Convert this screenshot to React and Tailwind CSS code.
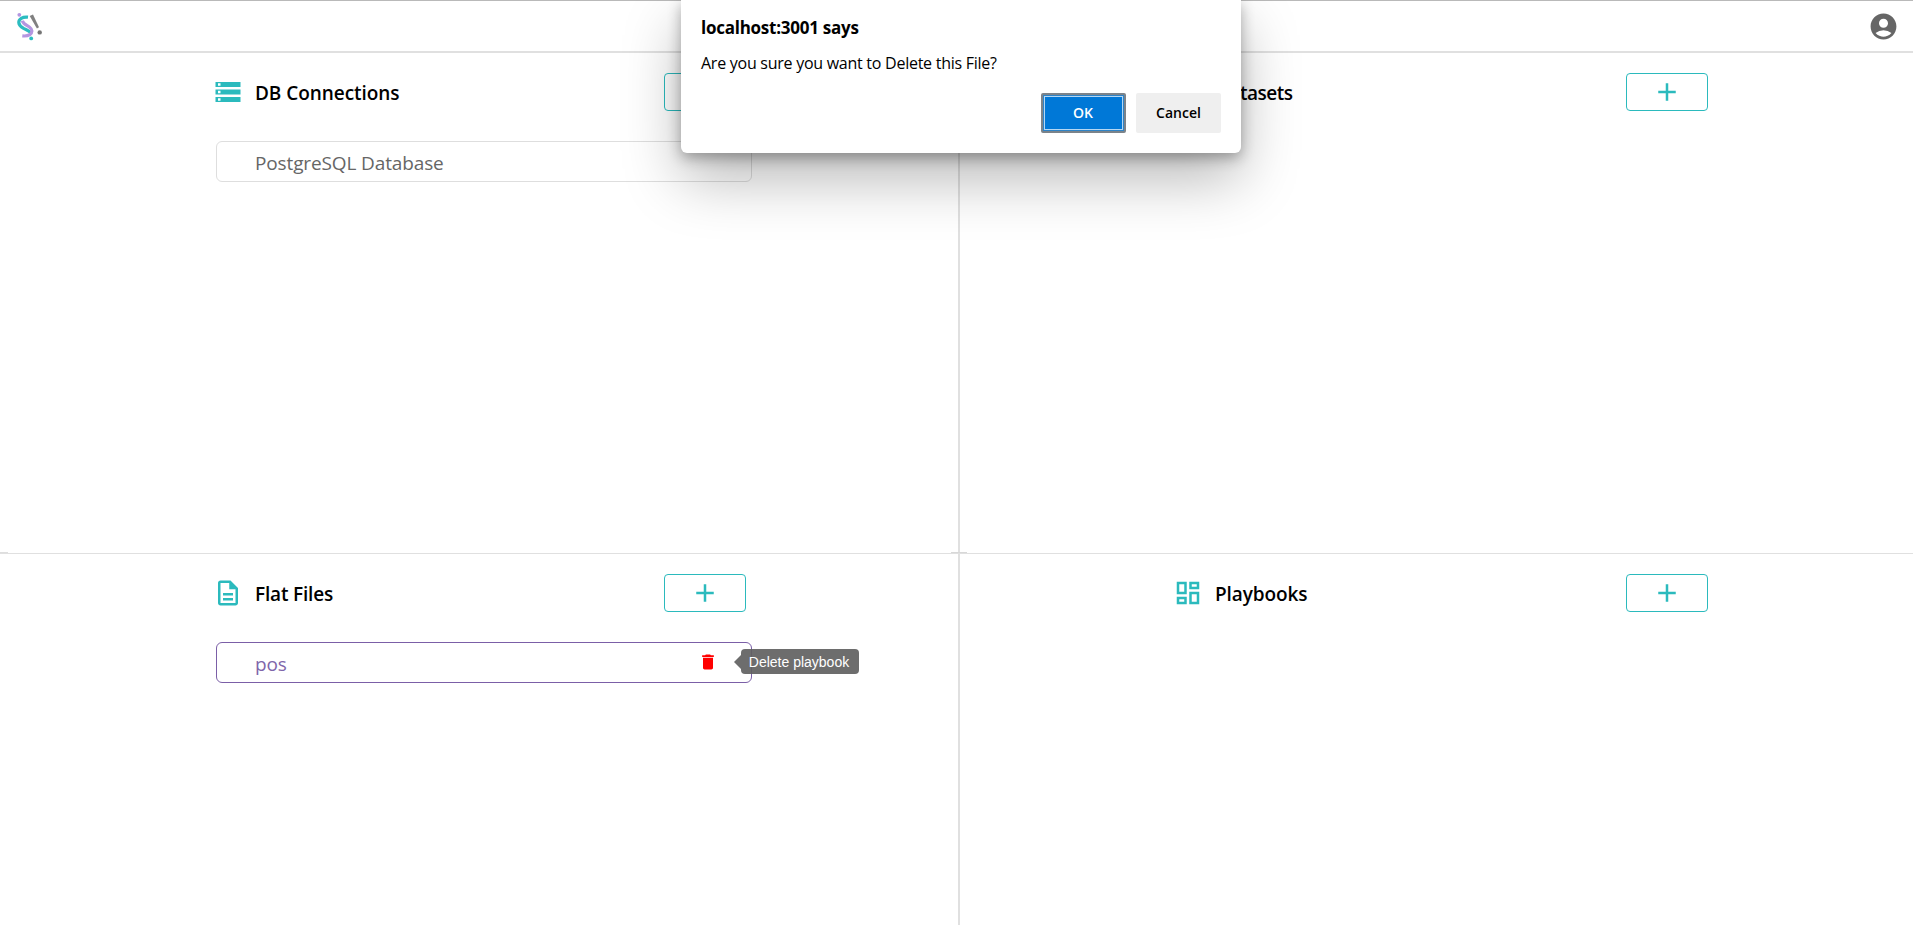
import { MdAccountCircle, MdAdd, MdDelete, MdOutlineDashboard, MdOutlineDescription, MdStorage, MdOutlineTableChart } from 'react-icons/md';

function Logo() {
  return (
    <svg width="28" height="30" viewBox="0 0 28 30" fill="none" className="mt-0.5">
      <path d="M13 5.200C7.500 4.500 3.600 7 3.800 10.600c.2 3 2.500 4.400 4.800 5.700 3 1.600 5.600 2.400 7.200 4.400" stroke="#2bbcc0" strokeWidth="3.200" />
      <path d="M7.300 8.800c1 3.400 4.600 4.400 7.300 6.400 3.200 2.300 2.900 5.600.2 7.500-2 1.300-4.500 1.500-7.500 1.200" stroke="#b496e0" strokeWidth="3.200" />
      <circle cx="4.300" cy="2.800" r="1.900" fill="#b496e0" />
      <circle cx="16.200" cy="26.400" r="1.900" fill="#2bbcc0" />
      <path d="M14.700 4 18 2.400 24 15.300 21.900 16.400Z" fill="#808080" />
      <circle cx="24.700" cy="20.400" r="2.200" fill="#757575" />
    </svg>
  );
}

function AddButton() {
  return (
    <button className="flex h-[38px] w-[82px] shrink-0 items-center justify-center rounded border border-[#2bbabd] text-[#2bbabd]">
      <MdAdd size={30} />
    </button>
  );
}

function PaneHeader({ icon: Icon, title, tracking = 'tracking-[-0.06px]' }) {
  return (
    <div className="flex h-[38px] items-center">
      <Icon size={30} className="mr-3 shrink-0 text-[#2bbabd]" />
      <h2 className={`flex-1 pt-px text-[19px] leading-6 font-semibold text-black ${tracking}`}>{title}</h2>
      <AddButton />
    </div>
  );
}

function Tooltip({ children }) {
  return (
    <div className="absolute top-[6px] left-[517px] flex items-center">
      <svg width="7" height="14" viewBox="0 0 7 14" className="shrink-0">
        <path d="M7 0v14L0 7Z" fill="#616161" fillOpacity="0.92" />
      </svg>
      <div className="flex h-[25px] w-[118px] items-center justify-center rounded bg-[#616161]/92 pr-0.5 font-['Liberation_Sans',sans-serif] text-sm leading-5 tracking-normal whitespace-nowrap text-white">
        {children}
      </div>
    </div>
  );
}

export default function App() {
  return (
    <div className="flex h-[925px] w-full flex-col overflow-hidden bg-white font-['Open_Sans',sans-serif]">
      <header className="flex h-[53px] shrink-0 items-center justify-between border-t border-b-2 border-t-[#b9b9b9] border-b-[#e0e0e0] pr-[14px] pl-[15px]">
        <Logo />
        <MdAccountCircle size={31} className="text-[#666666]" />
      </header>

      <main className="relative grid flex-1 grid-cols-[958px_2px_953px] grid-rows-[501px_1fr]">
        <section className="border-b border-[#e0e0e0] pt-5 pl-[213px]">
          <div className="w-[533px]">
            <PaneHeader icon={MdStorage} title="DB Connections" />
          </div>
          <div className="mt-[30px] ml-[3px] flex h-[41px] w-[536px] items-center rounded-md border border-[#dedede] pt-0.5 pl-[38px] text-[19px] leading-6 tracking-[-0.13px] text-[#666666]">
            PostgreSQL Database
          </div>
        </section>
        <div className="row-span-2 bg-[#e0e0e0]" />
        <section className="border-b border-[#e0e0e0] pt-5 pl-[214px]">
          <div className="w-[534px]">
            <PaneHeader icon={MdOutlineTableChart} title="Datasets" tracking="tracking-[-0.5px]" />
          </div>
        </section>

        <section className="pt-5 pl-[213px]">
          <div className="w-[533px]">
            <PaneHeader icon={MdOutlineDescription} title="Flat Files" tracking="tracking-[-0.18px]" />
          </div>
          <div className="relative mt-[30px] ml-[3px] flex h-[41px] w-[536px] items-center justify-between rounded-md border border-[#7b5fa7] pr-[33px] pl-[38px] text-[19px] leading-6 tracking-[-0.2px] text-[#7f66aa]">
            <span className="pt-0.5">pos</span>
            <MdDelete size={20} className="mb-px text-[#ff0000]" />
            <Tooltip>Delete playbook</Tooltip>
          </div>
        </section>
        <section className="pt-5 pl-[213px]">
          <div className="w-[535px]">
            <PaneHeader icon={MdOutlineDashboard} title="Playbooks" tracking="tracking-[-0.1px]" />
          </div>
        </section>

        <div className="absolute top-[499px] left-0 h-px w-2 bg-[#dedede]" />
        <div className="absolute top-[499px] left-[951px] h-px w-4 bg-[#d8d8d8]" />
      </main>

      <div
        role="dialog"
        className="absolute top-0 left-[681px] h-[153px] w-[560px] rounded-b-md bg-white px-5 pt-[18px] text-black shadow-[0_26px_58px_rgba(0,0,0,0.28),0_5px_14px_rgba(0,0,0,0.3)]"
      >
        <h1 className="text-[17px] leading-5 font-bold tracking-[-0.25px]">localhost:3001 says</h1>
        <p className="mt-[15px] text-base leading-5 tracking-[-0.26px]">Are you sure you want to Delete this File?</p>
        <div className="mt-5 flex justify-end gap-2.5 text-sm font-semibold">
          <button className="h-10 w-[85px] rounded-xs border-2 border-[#7b838a] bg-[#2f83c6] p-px text-white">
            <span className="flex h-full items-center justify-center border border-[#b5d7f3] bg-[#0078d7] pr-px">OK</span>
          </button>
          <button className="h-10 w-[85px] rounded-xs bg-[#efefef] text-black">Cancel</button>
        </div>
      </div>
    </div>
  );
}
